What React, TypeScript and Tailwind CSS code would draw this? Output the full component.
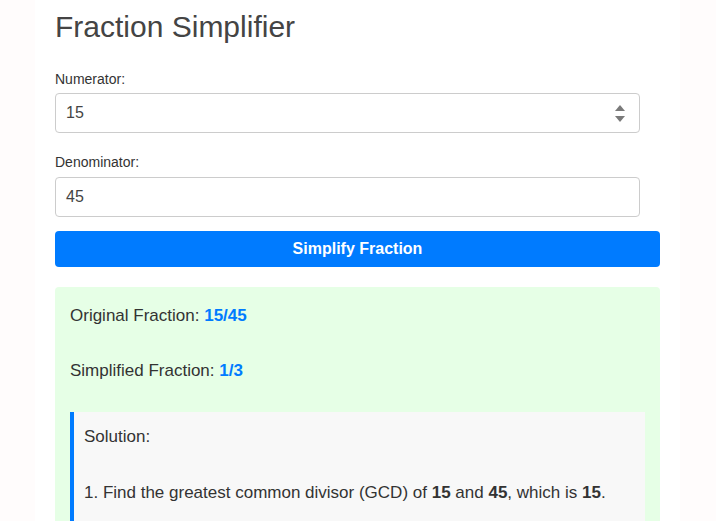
import React from "react";

export default function App() {
  return (
    <div className="min-h-[521px] bg-[#fffcfc] overflow-hidden" style={{ fontFamily: '"Liberation Sans", Arial, sans-serif' }}>
      <div className="w-[645px] ml-[35px] bg-white px-[20px] pt-[9px] pb-[40px] text-[#333]">
        <h1 className="text-[30px] leading-[35px] text-[#444] mb-[27px]">Fraction Simplifier</h1>

        <label className="block text-[14px] leading-[16px] mb-[6px]">Numerator:</label>
        <div className="relative w-[585px] h-[40px] border border-[#ccc] rounded-[4px] bg-white flex items-center px-[10px] text-[16px] text-[#444]">
          <span>15</span>
          <svg className="absolute right-[14px] top-[11px]" width="10" height="17" viewBox="0 0 10 17">
            <path d="M5 0 L10 6 L0 6 Z" fill="#7a7a7a" />
            <path d="M5 17 L10 11 L0 11 Z" fill="#7a7a7a" />
          </svg>
        </div>

        <label className="block text-[14px] leading-[16px] mt-[21px] mb-[7px]">Denominator:</label>
        <div className="w-[585px] h-[40px] border border-[#ccc] rounded-[4px] bg-white flex items-center px-[10px] text-[16px] text-[#444]">
          <span>45</span>
        </div>

        <button className="mt-[14px] w-full h-[36px] bg-[#007bff] rounded-[4px] text-white font-bold text-[16px]">
          Simplify Fraction
        </button>

        <div className="mt-[20px] bg-[#e6ffe6] rounded-[4px] px-[15px] pt-[17px] pb-[20px] text-[17px]">
          <p className="leading-[24px] mb-[31px]">
            Original Fraction: <span className="font-bold text-[#007bff]">15/45</span>
          </p>
          <p className="leading-[24px] mb-[29px]">
            Simplified Fraction: <span className="font-bold text-[#007bff]">1/3</span>
          </p>
          <div className="bg-[#f8f8f8] border-l-4 border-[#007bff] pl-[10px] pr-[10px] pt-[13px] pb-[20px]">
            <p className="leading-[24px] mb-[32px]">Solution:</p>
            <p className="leading-[24px]">
              1. Find the greatest common divisor (GCD) of <b>15</b> and <b>45</b>, which is <b>15</b>.
            </p>
          </div>
        </div>
      </div>
    </div>
  );
}
